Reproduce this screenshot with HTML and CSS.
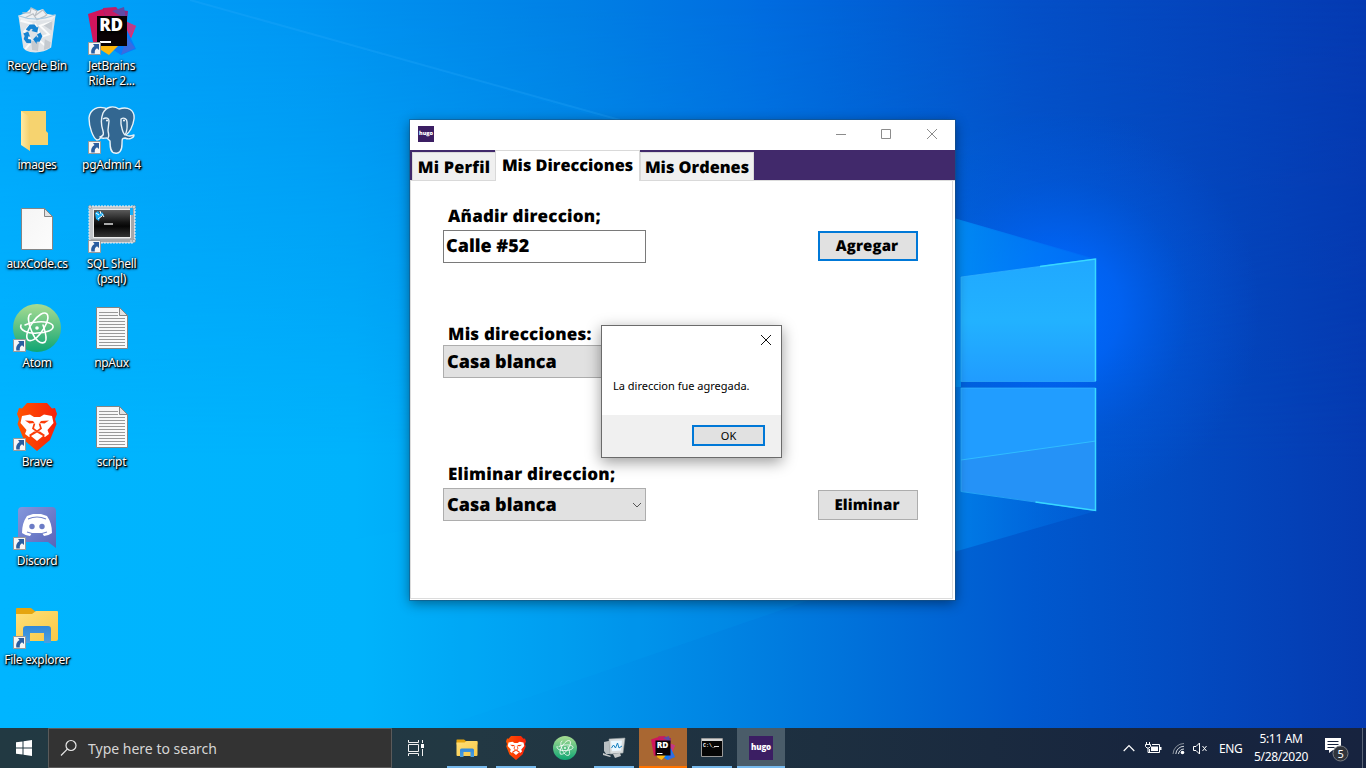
FILE: index.html
```html
<!DOCTYPE html>
<html lang="en">
<head>
<meta charset="utf-8">
<title>Desktop</title>
<link rel="stylesheet" href="styles.css">
</head>
<body>
<svg class="defs" width="0" height="0" aria-hidden="true">
  <defs>
    <linearGradient id="gAtom" x1="0" y1="0" x2="0" y2="1"><stop offset="0" stop-color="#a8dc92"/><stop offset="1" stop-color="#0fa573"/></linearGradient>
    <linearGradient id="gBrave" x1="0" y1="0" x2="1" y2="0"><stop offset="0" stop-color="#ff5500"/><stop offset="1" stop-color="#f8200a"/></linearGradient>
    <linearGradient id="gFolder" x1="0" y1="0" x2="1" y2="1"><stop offset="0" stop-color="#ffe07a"/><stop offset="1" stop-color="#f9c845"/></linearGradient>
    <linearGradient id="gBlue" x1="0" y1="0" x2="0" y2="1"><stop offset="0" stop-color="#3288d8"/><stop offset="1" stop-color="#4aa0e2"/></linearGradient>
    <linearGradient id="gImg" x1="0" y1="0" x2="1" y2="0"><stop offset="0" stop-color="#ffeaa4"/><stop offset="1" stop-color="#f5cf6a"/></linearGradient>
    <linearGradient id="gPage" x1="0" y1="0" x2="1" y2="1"><stop offset="0" stop-color="#f5f5f5"/><stop offset="1" stop-color="#fcfcfc"/></linearGradient>
    <linearGradient id="gTerm" x1="0" y1="0" x2="0" y2="1"><stop offset="0" stop-color="#5a5a5a"/><stop offset=".45" stop-color="#151515"/><stop offset=".6" stop-color="#060606"/><stop offset="1" stop-color="#333"/></linearGradient>
    <linearGradient id="gDiscord" x1="0" y1="0" x2="1" y2="1"><stop offset="0" stop-color="#8496dc"/><stop offset="1" stop-color="#5865b8"/></linearGradient>
    <symbol id="shortcut" viewBox="0 0 13 13">
      <path d="M.5.5h12v12H.5z" fill="#f6f6f6" stroke="#9a9a9a"/>
      <path d="M5 2h6v6L9 6.3C7 7.300 6.600 9 6.800 11.500H3.300C2.600 8 4 5.500 6.500 4z" fill="#2a5d9f"/>
    </symbol>
    <symbol id="bin" viewBox="0 0 48 48">
      <path d="M5 10l38-1-4.500 33.500Q29 49 17 47q-5-1-7-4z" fill="#dfe3e7"/>
      <path d="M5 10l8-3 5-5 6 3 6-2 4 5 9 2-4 4-30 2z" fill="#eef0f2"/>
      <path d="M9 7l8 0 1-5 6 3-2 5 8-6 4 5-6 4M12 12l8-4 4 6 9-4" fill="none" stroke="#b9bfc5" stroke-width="1.200"/>
      <path d="M7 15l11 3-7 8 8 10-7 8M40 16l-13 4 9 9-12 4 10 9M22 18l5 12-4 15" fill="none" stroke="#fafbfb" stroke-width="2"/>
      <path d="M31 20l9-5-1 10zM32 34l6 3-1 6-6 2zM18 35l8 2-1 9-6-1z" fill="#c4cad0"/>
      <path d="M5 10q18 7 38-1" fill="none" stroke="#a8c9df" stroke-width="1.200"/>
      <g fill="#1583d2"><path d="M12.500 24l4-5 5 0 2.500 3 1.500-1-1.200 6-6-1.500 1.600-1.300-2-1-2 2.600z"/><path d="M10 28l5-2 2 5.500-1.700-.7-.7 3 3.400.3v4l-4.600-.3-3-4.200 1-3z"/><path d="M24 29l3.500-2 2 4-2.800 5.500h-3v2.200L20 34l3.700-4v2h1.800z"/></g>
    </symbol>
    <symbol id="rider" viewBox="0 0 48 48">
      <path d="M0 7L18 1l10 8 6 30-12-2L6 40z" fill="#d0155c"/>
      <path d="M15 1l25 3-2 19-16 6z" fill="#8f2a80"/><path d="M15 1l13-1 7 8-17 2z" fill="#c51c63"/><path d="M24 4l12-4 2 12z" fill="#604aa4"/>
      <path d="M37 14l11 5-8 20-6-4z" fill="#fa2364"/><path d="M38 15l10 4-6 11z" fill="#bd3c88"/>
      <path d="M33 37l6-14 9 19-15 6-12-8z" fill="#087cfa"/><path d="M39 30l8 11-14 7z" fill="#3a6ae0"/>
      <path d="M10 36l20 3-9 9-8-5z" fill="#fdb60d"/>
      <path d="M9 9h30v30H9z" fill="#090205"/>
      <path d="M12 34h11v2H12z" fill="#fff"/>
      <text x="11.300" y="24.300" class="rd-text" textLength="23.500" lengthAdjust="spacingAndGlyphs">RD</text>
    </symbol>
    <symbol id="brave" viewBox="0 0 48 48">
      <path d="M14 0h20l5 5.500 3-.5 2 6-2 5 1.500 5-6.500 16L24 48 11 37 4.500 21 6 16 4 11l2-6 3 .5z" fill="url(#gBrave)"/>
      <path d="M9 13l8-1.500 4 2.500h6l4-2.500 8 1.500 1.500 7-6 7 1.500 4-4 3-5-4.500h-6L16 34l-4-3 1.500-4-6-7z" fill="#fff"/>
      <path d="M12 17.500l8 .5 1.500 2-5 .5zM36 17.500l-8 .5-1.500 2 5 .5z" fill="#fb3c08"/>
      <path d="M21.500 20.500l-1.500 5 4 3 4-3-1.500-5" fill="none" stroke="#fb3c08" stroke-width="1.700"/>
      <path d="M16 32l5-3.500h6l5 3.500-8 7.500z" fill="#fb3c08"/>
      <path d="M18 33l6-3.500 6 3.500-6 5z" fill="#fff"/>
    </symbol>
    <symbol id="atom" viewBox="0 0 48 48">
      <circle cx="24" cy="24" r="24" fill="url(#gAtom)"/>
      <g fill="none" stroke="#fff" stroke-width="1.600" stroke-linecap="round">
        <path d="M8 21c-2 5 7 9 16 8 9 0 17-3 16-7-1-3-8-5-16-4-4 0-8 1-12 3"/>
        <path d="M15 36c-3-3 0-12 5-18 5-7 11-11 14-8 3 4-2 14-7 20-4 5-9 8-12 6"/>
        <path d="M18 10c-4 0-3 10 1 18 3 8 9 13 13 10 3-3 0-11-2-17"/>
      </g><circle cx="24" cy="24" r="1.800" fill="#fff"/>
    </symbol>
    <symbol id="explorer" viewBox="0 0 48 48">
      <path d="M3 11V8q0-1 1-1h14l5 4h21q1 0 1 2v4H3z" fill="#e5a50f"/>
      <path d="M3 13h16l4-3h21q1 0 1 1v27q0 2-2 2H5q-2 0-2-2z" fill="url(#gFolder)"/>
      <path d="M10 42V28q0-3 3-3h22q3 0 3 3v14h-7V32H17v10z" fill="url(#gBlue)"/>
    </symbol>
    <symbol id="note" viewBox="0 0 48 48">
      <path d="M8.500 3.500h23l8 8v33h-31z" fill="url(#gPage)" stroke="#858585"/>
      <path d="M31.500 3.500v8h8z" fill="#e2e2e2" stroke="#858585"/>
    </symbol>
  </defs>
</svg>

<main class="desktop">
  <svg class="wallpaper" viewBox="0 0 1366 768" preserveAspectRatio="none" aria-hidden="true">
    <defs>
      <linearGradient id="wTop" gradientUnits="userSpaceOnUse" x1="0" y1="0" x2="1366" y2="0">
        <stop offset="0" stop-color="#00a5fb"/><stop offset=".22" stop-color="#0096f3"/><stop offset=".42" stop-color="#0080e5"/><stop offset=".56" stop-color="#006ce0"/><stop offset=".75" stop-color="#0450c8"/><stop offset="1" stop-color="#053ab2"/>
      </linearGradient>
      <linearGradient id="wLow" gradientUnits="userSpaceOnUse" x1="0" y1="0" x2="1366" y2="0">
        <stop offset="0" stop-color="#00b5ff"/><stop offset=".26" stop-color="#00b3fc"/><stop offset=".4" stop-color="#009df0"/><stop offset=".55" stop-color="#0080e1"/><stop offset=".75" stop-color="#0059cf"/><stop offset="1" stop-color="#053ab0"/>
      </linearGradient>
      <linearGradient id="fade" x1="0" y1="0" x2="0" y2="1"><stop offset="0" stop-color="#000"/><stop offset=".6" stop-color="#fff"/></linearGradient>
      <mask id="lowMask"><rect width="1366" height="768" fill="url(#fade)"/></mask>
      <radialGradient id="glow" gradientUnits="userSpaceOnUse" cx="1060" cy="310" r="200">
        <stop offset="0" stop-color="#0069ff"/><stop offset=".3" stop-color="#0068ff" stop-opacity=".75"/><stop offset=".65" stop-color="#0062f2" stop-opacity=".25"/><stop offset="1" stop-color="#0060f0" stop-opacity="0"/>
      </radialGradient>
      <linearGradient id="paneTop" x1="0" y1="0" x2="0" y2="1"><stop offset="0" stop-color="#20a8ff"/><stop offset=".5" stop-color="#22b2ff"/><stop offset="1" stop-color="#209cff"/></linearGradient>
      <linearGradient id="beam" x1="0" y1="0" x2="1" y2="0"><stop offset="0" stop-color="#00a0ff" stop-opacity=".7"/><stop offset="1" stop-color="#0080ff" stop-opacity=".25"/></linearGradient>
    </defs>
    <rect width="1366" height="768" fill="url(#wTop)"/>
    <rect width="1366" height="768" fill="url(#wLow)" mask="url(#lowMask)"/>
    <rect width="1366" height="768" fill="url(#glow)"/>
    <path d="M190 0L1096 260 960 276V220L620 120z" fill="#00a0ff" opacity=".1"/>
    <path d="M190 0l430 120" stroke="#35b6ff" stroke-opacity=".2" stroke-width="2" fill="none"/>
    <path d="M0 600L440 524 955 460v90L440 728H0z" fill="#00beff" opacity=".09"/>
    <path d="M940 214L1096 259 961 277V387H940z" fill="url(#beam)"/>
    <path d="M940 556L1096 511 961 491V380H940z" fill="url(#beam)" opacity=".65"/>
    <path d="M961 277L1096 259V381H961z" fill="url(#paneTop)"/>
    <path d="M961 388h135v122L961 491z" fill="#219dff"/>
    <path d="M961 460l135-19v69l-135-19z" fill="#2592f7"/>
    <path d="M961 460l135-19" stroke="#30bdff" fill="none"/>
    <path d="M1095.500 382V259L961 277v104.500h134M961 388h134.500v122.500L961 491.500z" fill="none" stroke="#35b8ff" stroke-opacity=".7"/>
    <path d="M1040 266.500l55.500-7.500v122M1095.500 388v122.500l-60-8.500" fill="none" stroke="#38d8ff" stroke-width="1.500"/>
  </svg>

  <section class="icons">
    <div class="item"><svg class="pic" viewBox="0 0 48 48"><use href="#bin" y="-1" width="48" height="47"/></svg><span>Recycle Bin</span></div>
    <div class="item"><svg class="pic" viewBox="0 0 48 48"><path d="M8 5h25v20l2 2v12H17L8 33z" fill="#f6d36f"/><path d="M8 5l9 6v34l-9-6z" fill="url(#gImg)"/></svg><span>images</span></div>
    <div class="item"><svg class="pic" viewBox="0 0 48 48"><use href="#note"/></svg><span>auxCode.cs</span></div>
    <div class="item"><svg class="pic" viewBox="0 0 48 48"><use href="#atom"/><use href="#shortcut" y="35" width="13" height="13"/></svg><span>Atom</span></div>
    <div class="item"><svg class="pic" viewBox="0 0 48 48"><use href="#brave"/><use href="#shortcut" y="35" width="13" height="13"/></svg><span>Brave</span></div>
    <div class="item"><svg class="pic" viewBox="0 0 48 48"><path d="M9 5h30q4 0 4 4v37l-8-6H9q-4 0-4-4V9q0-4 4-4z" fill="url(#gDiscord)"/><path d="M14 14l6-2h8l6 2q5 7 5 17-4 3-8 3l-2-3H19l-2 3q-4 0-8-3 0-10 5-17z" fill="#fff"/><path d="M15 17q9-4 18 0M14 30q10 4 20 0" stroke="#7182ca" fill="none" stroke-width="1.200"/><circle cx="19" cy="24.500" r="2.700" fill="#6c7cc6"/><circle cx="29" cy="24.500" r="2.700" fill="#6c7cc6"/><use href="#shortcut" y="35" width="13" height="13"/></svg><span>Discord</span></div>
    <div class="item"><svg class="pic" viewBox="0 0 48 48"><use href="#explorer"/><use href="#shortcut" y="35" width="13" height="13"/></svg><span>File explorer</span></div>
    <div class="item"><svg class="pic" viewBox="0 0 48 48"><use href="#rider"/><use href="#shortcut" y="35" width="13" height="13"/></svg><span>JetBrains<br>Rider 2...</span></div>
    <div class="item"><svg class="pic" viewBox="0 0 48 48"><g fill="#336791" stroke="#e8f2f8" stroke-width="1.400" stroke-linejoin="round"><path d="M20 3C10-1 2 3 1 12c0 9 4 20 8 22 4 0 4-4 7-6z"/><path d="M31 3c9-3 16 1 15 10-1 8-5 14-8 16 3 2 5 1 8 0 0 3-5 5-9 3-3 0-3 1-3 6 0 7-3 10-7 9-4 0-5-4-5-12l-3-3c-3 0-6 1-7-1 3-1 4-2 3-6-2-6-2-13 0-18C18 1 25-1 31 3z"/><path d="M15 13c3-2 6-1 6 2l-1 9c0 4 2 5 0 8M33 13c3-2 6 0 6 3 0 4 1 8-2 13-3-3-3-7-4-11z" fill="none"/></g><circle cx="19" cy="14.500" r="1" fill="#fff"/><circle cx="36" cy="14.500" r="1" fill="#fff"/><use href="#shortcut" y="35" width="13" height="13"/></svg><span>pgAdmin 4</span></div>
    <div class="item"><svg class="pic" viewBox="0 0 48 48"><path d="M1 1h46v35l-2 2H4l-3-4z" fill="#c3c6ca" stroke="#f4f6f8" stroke-dasharray="2 1"/><path d="M42 4h4v31h-4zM3 34h39v3H3z" fill="#a5a8ab"/><path d="M5 4h38v29H5z" fill="#ececec"/><path d="M6 5h36v27H6z" fill="url(#gTerm)"/><path d="M42 3h3v7h-3zM7 8l3-2 2 3 2-2 2 3-4 2-1 4-3-2z" fill="#16aef7"/><path d="M8 8l3 2M12 6l1 3M10 14l4-3M14 9l2 3" stroke="#fff"/><path d="M16 19h9" stroke="#fff" stroke-width="1.300"/><g fill="#dfe5ea" stroke="#777" stroke-width=".5"><circle cx="2" cy="2" r="1.500"/><circle cx="46" cy="2" r="1.500"/><circle cx="46" cy="36" r="1.500"/></g><use href="#shortcut" y="35" width="13" height="13"/></svg><span>SQL Shell<br>(psql)</span></div>
    <div class="item"><svg class="pic" viewBox="0 0 48 48"><use href="#note"/><path d="M11 8.500h19M11 11.500h19M11 14.500h26M11 17.500h26M11 20.500h26M11 23.500h26M11 26.500h26M11 29.500h26M11 32.500h26M11 35.500h26M11 38.500h26M11 41.500h26" stroke="#999"/></svg><span>npAux</span></div>
    <div class="item"><svg class="pic" viewBox="0 0 48 48"><use href="#note"/><path d="M11 8.500h19M11 11.500h19M11 14.500h26M11 17.500h26M11 20.500h26M11 23.500h26M11 26.500h26M11 29.500h26M11 32.500h26M11 35.500h26M11 38.500h26M11 41.500h26" stroke="#999"/></svg><span>script</span></div>
  </section>

  <section class="window">
    <header class="titlebar">
      <span class="hugo hugo-small">hugo</span>
      <div class="controls">
        <svg width="12" height="12"><path d="M1 6.500h10" stroke="#8c8c8c"/></svg>
        <svg width="12" height="12"><path d="M1.500 1.500h9v9h-9z" fill="none" stroke="#8c8c8c"/></svg>
        <svg width="12" height="12"><path d="M1 1l10 10M11 1L1 11" stroke="#8c8c8c"/></svg>
      </div>
    </header>
    <nav class="tabs"><span class="tab t1">Mi Perfil</span><span class="tab active">Mis Direcciones</span><span class="tab t3">Mis Ordenes</span></nav>
    <div class="form">
      <div class="row r1">
        <div><div class="label">Añadir direccion;</div><div class="field input">Calle #52</div></div>
        <div class="button focus">Agregar</div>
      </div>
      <div class="row r2">
        <div><div class="label">Mis direcciones:</div><div class="field">Casa blanca</div></div>
      </div>
      <div class="row r3">
        <div><div class="label">Eliminar direccion;</div><div class="field">Casa blanca<svg width="10" height="8"><path d="M1 2l4 4 4-4" fill="none" stroke="#555"/></svg></div></div>
        <div class="button">Eliminar</div>
      </div>
    </div>
  </section>

  <section class="dialog">
    <div class="dialog-top"><svg width="12" height="12"><path d="M1 1l10 10M11 1L1 11" stroke="#111"/></svg></div>
    <p class="message">La direccion fue agregada.</p>
    <footer class="dialog-footer"><div class="ok">OK</div></footer>
  </section>
</main>

<footer class="taskbar">
  <div class="start"><svg width="16" height="16"><path d="M0 2.300L6.500 1.400v6.100H0zM7.500 1.200L16 0v7.500H7.500zM0 8.500h6.500v6.100L0 13.700zM7.500 8.500H16V16l-8.500-1.200z" fill="#fff"/></svg></div>
  <div class="search"><svg width="18" height="18"><circle cx="11" cy="6.500" r="5" fill="none" stroke="#e8e8e8" stroke-width="1.200"/><path d="M7.300 10.200L1 16.500" stroke="#e8e8e8" stroke-width="1.200"/></svg><span>Type here to search</span></div>
  <div class="taskview"><svg width="18" height="16"><path d="M1.500 0v2.500h10V0M1.500 16v-2.500h10V16M1.500 4.500h10v7h-10zM15.500 0v3M15.500 9v7" fill="none" stroke="#f0f0f0"/><path d="M14 4h3v4h-3z" fill="#fff"/></svg></div>
  <div class="apps">
    <div class="app open"><svg viewBox="0 0 48 48"><use href="#explorer"/></svg></div>
    <div class="app open"><svg viewBox="0 0 48 48"><use href="#brave"/></svg></div>
    <div class="app"><svg viewBox="0 0 48 48"><use href="#atom"/></svg></div>
    <div class="app open"><svg viewBox="0 0 24 24"><path d="M2 6l9-2v14H4l-2-3z" fill="#b9c0c3"/><path d="M7 3l16-1-2 15-13 1z" fill="#d8dcdd" stroke="#969da0" stroke-width=".6"/><path d="M9 5l11-.5-1 10-9 .7z" fill="#eaf7ff"/><path d="M9.500 12l2-3 2 3 2-5 1.500 5 3-2" fill="none" stroke="#1781c0"/><path d="M11 18l7-1 1 3-6 2zM1 17l8 3-1 1-7-2z" fill="#c6cacb"/></svg></div>
    <div class="app rider"><svg viewBox="0 0 48 48"><use href="#rider"/></svg></div>
    <div class="app open"><svg viewBox="0 0 24 24"><path d="M1.500 2.500h21v18h-21z" fill="#050505" stroke="#999"/><path d="M2 3h20v2H2z" fill="#d6d6d6"/><text x="3" y="11" class="prompt">C:\_</text><path d="M14 10.500h5" stroke="#ddd"/></svg></div>
    <div class="app current"><span class="hugo">hugo</span></div>
  </div>
  <div class="tray">
    <svg class="chev" width="12" height="8"><path d="M.7 7L6 1.500 11.300 7" fill="none" stroke="#fff" stroke-width="1.200"/></svg>
    <svg class="battery" width="17" height="13"><path d="M1.500 0v2M4.500 0v2M.5 2.500h5v2L4 6H2L.5 4.500zM3 6v4.500h2M7 2.500h7.500v8H4.500V7" fill="none" stroke="#fff"/><path d="M6 4.500h7v4.500H6zM15 5h1.500v3H15z" fill="#fff"/></svg>
    <svg class="wifi" width="13" height="13"><path d="M1 12A11 11 0 0 1 12 1.500" fill="none" stroke="#88909b"/><path d="M3.800 12A8.200 8.200 0 0 1 12 4.300M6.500 12A5.500 5.500 0 0 1 12 7" fill="none" stroke="#d5dae0"/><circle cx="10.500" cy="10.500" r="1.800" fill="#fff"/></svg>
    <svg class="sound" width="15" height="13"><path d="M.5 4.500H3L6.500 1v11L3 8.500H.5zM9.500 4l4 5M13.500 4l-4 5" fill="none" stroke="#fff"/></svg>
    <span class="lang">ENG</span>
    <div class="clock"><span class="time">5:11 AM</span><span class="date">5/28/2020</span></div>
    <svg class="notice" width="26" height="26"><path d="M1 1h16v12H9l-4 3v-3H1z" fill="#fff"/><path d="M3.500 4.500h11M3.500 7.500h11M3.500 10.500h7" stroke="#17233d"/><circle cx="16.500" cy="16.500" r="7.500" fill="#30343b" stroke="#777b82"/><text x="13.500" y="20.600" class="count">5</text></svg>
    <span class="edge"></span>
  </div>
</footer>
</body>
</html>
```
FILE: styles.css
```css
* { box-sizing: border-box; }
body { margin: 0; width: 1366px; height: 768px; overflow: hidden; font-family: "Noto Sans", "Open Sans", sans-serif; display: flex; flex-direction: column; background: #0080e5; }
svg { display: block; flex: none; }
.defs { position: absolute; }
.desktop { height: 728px; position: relative; overflow: hidden; }
.wallpaper { position: absolute; left: 0; top: 0; width: 1366px; height: 768px; }

.icons { position: relative; width: 149px; height: 728px; display: grid; grid-template-rows: repeat(7, 99px); grid-template-columns: 74px 75px; grid-auto-flow: column; padding-top: 7px; }
.item { display: flex; flex-direction: column; align-items: center; color: #fff; font-size: 12px; line-height: 15px; letter-spacing: -.3px; text-align: center; white-space: nowrap; text-shadow: 1px 1px 1px #000, 1px 1px 2px #000, 0 1px 3px rgba(0,0,0,.9), 0 0 2px rgba(0,0,0,.6); }
.item span { margin-top: 3px; }
.pic { width: 48px; height: 48px; }
.rd-text { font: 800 17px "Open Sans", sans-serif; fill: #fff; }

.window { position: absolute; left: 410px; top: 120px; width: 545px; height: 480px; background: #fff; display: flex; flex-direction: column; box-shadow: 0 0 0 1px rgba(30,80,120,.5), 0 3px 12px rgba(0,0,0,.45); font-family: "Open Sans", "Noto Sans", sans-serif; font-weight: 800; color: #000; text-rendering: geometricPrecision; }
.titlebar { height: 30px; display: flex; align-items: center; justify-content: space-between; padding: 0 17px 2px 8px; }
.hugo { display: flex; align-items: center; justify-content: center; width: 24px; height: 24px; padding-bottom: 2px; background: #3b1e63; color: #fff; font: 800 8px/10px "Open Sans", sans-serif; letter-spacing: -.2px; }
.hugo-small { width: 16px; height: 16px; font-size: 5.500px; letter-spacing: -.1px; }
.controls { display: flex; gap: 34px; }
.controls svg:nth-child(2) { margin-left: -1px; }
.tabs { height: 31px; background: #41296b; border-bottom: 1px solid #dcdcdc; display: flex; align-items: flex-end; padding-left: 2px; font-size: 16.300px; white-space: nowrap; }
.tab { height: 29px; margin-bottom: -1px; display: flex; align-items: center; justify-content: center; background: #f0f0f0; border: 1px solid #d9d9d9; }
.t1 { width: 83px; border-right: 0; letter-spacing: .2px; }
.t3 { width: 114px; }
.active { width: 145px; height: 31px; background: #fff; border-bottom: 0; padding-bottom: 2px; }
.form { flex: 1; border: solid #dcdcdc; border-width: 0 1px 1px; margin: 0 2px 1px 0; padding: 25px 34px 0 32px; }
.row { display: flex; justify-content: space-between; align-items: flex-end; }
.r1 { height: 57px; }
.r2 { height: 54px; margin-top: 61px; }
.r3 { height: 57px; margin-top: 86px; }
.label { height: 24px; line-height: 19px; font-size: 17px; letter-spacing: .2px; padding-left: 5px; white-space: nowrap; }
.r2 .label { height: 21px; }
.field { width: 203px; height: 33px; border: 1px solid #adadad; background: #e1e1e1; display: flex; align-items: center; justify-content: space-between; padding: 0 3px; font-size: 18px; white-space: nowrap; }
.input { background: #fff; border-color: #7a7a7a; padding: 0 3px 2px 2px; }
.button { width: 100px; height: 30px; border: 1px solid #adadad; background: #e1e1e1; display: flex; align-items: center; justify-content: center; font-size: 15px; letter-spacing: .1px; padding-right: 2px; margin-bottom: 1px; }
.focus { border: 2px solid #0078d7; margin-bottom: 2px; }

.dialog { position: absolute; left: 601px; top: 325px; width: 181px; height: 133px; background: #fff; border: 1px solid #6b6b6b; box-shadow: 0 4px 14px rgba(0,0,0,.4); display: flex; flex-direction: column; font-size: 11px; color: #000; }
.dialog-top { height: 52px; display: flex; justify-content: flex-end; padding: 8px 9px 0 0; }
.message { margin: 0; flex: 1; padding-left: 11px; line-height: 16px; white-space: nowrap; }
.dialog-footer { height: 42px; background: #f0f0f0; display: flex; justify-content: flex-end; padding: 10px 16px 0 0; }
.ok { width: 73px; height: 21px; border: 2px solid #0078d7; background: #e1e1e1; display: flex; align-items: center; justify-content: center; }

.taskbar { position: relative; height: 40px; display: flex; background: linear-gradient(90deg, #223942 0, #223843 35%, #1d2f40 60%, #17253e 85%, #17233f 100%); color: #fff; }
.start, .taskview { width: 48px; display: flex; align-items: center; justify-content: center; }
.search { width: 344px; background: #333; border: 1px solid #5a5a5a; display: flex; align-items: center; padding-left: 11px; gap: 10px; font-size: 14px; color: #d6d6d6; }
.apps { display: flex; gap: 1px; margin-left: 3px; }
.app { width: 48px; height: 40px; display: flex; align-items: center; justify-content: center; background: no-repeat center bottom; }
.app svg { width: 24px; height: 24px; }
.open { background-image: linear-gradient(#76b9ed, #76b9ed); background-size: 40px 2px; }
.rider { background: #a96732; border-bottom: 2px solid #ff7300; padding-top: 2px; }
.current { background: #4a5c69; border-bottom: 2px solid #76b9ed; padding-top: 2px; }
.prompt { font: 700 5px "Liberation Mono", monospace; fill: #fff; }
.tray { flex: 1; display: flex; align-items: center; padding-left: 338px; font-size: 12px; white-space: nowrap; }
.battery { margin-left: 10px; }
.wifi { margin-left: 10px; }
.sound { margin-left: 8px; }
.lang { margin-left: 11px; width: 25px; letter-spacing: -.4px; }
.clock { margin-left: 7px; width: 60px; display: flex; flex-direction: column; align-items: center; line-height: 18px; letter-spacing: -.35px; }
.notice { margin-left: 13px; margin-top: 4px; }
.count { font: 11px "Noto Sans", sans-serif; fill: #fff; }
.edge { width: 1px; height: 40px; background: #5b6577; margin-left: 12px; }
```
